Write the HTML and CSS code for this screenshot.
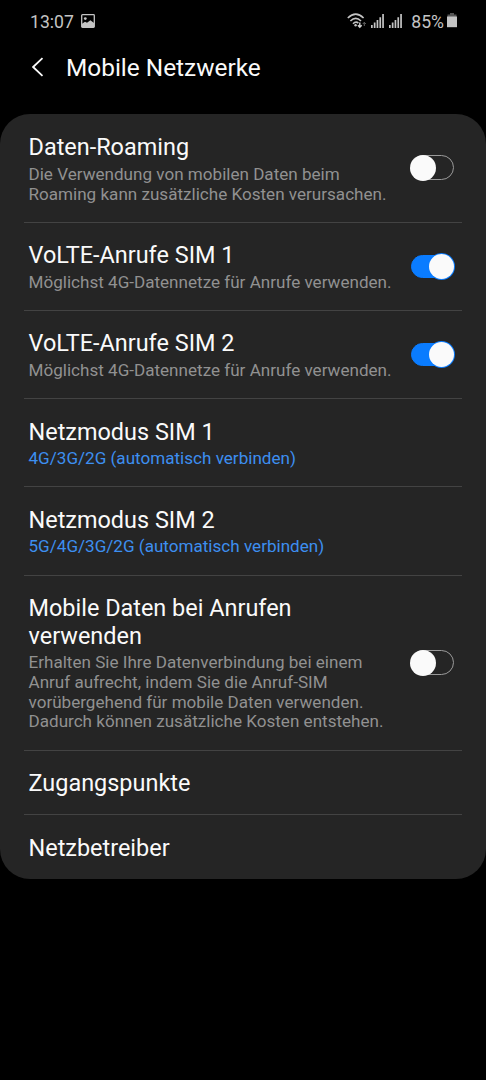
FILE: index.html
```html
<!DOCTYPE html>
<html lang="de">
<head>
<meta charset="utf-8">
<title>Mobile Netzwerke</title>
<link rel="stylesheet" href="styles.css">
</head>
<body>
<div class="status">
  <span class="clock">13:07</span>
  <svg class="picture" width="14" height="14" viewBox="0 0 14 14"><rect x=".7" y=".7" width="12.6" height="12.6" rx=".8" fill="none" stroke="#c4c4c4" stroke-width="1.3"/><circle cx="4.3" cy="4.6" r="1.4" fill="#c4c4c4"/><path d="M1 9.8l3-2 2 1 3.4-2.6L13 9V13H1z" fill="#c4c4c4"/></svg>
  <svg class="wifi" width="20" height="16" viewBox="0 0 20 16"><g fill="none" stroke="#c4c4c4" stroke-width="1.6"><path d="M.8 5Q8.7 -2.6 16.6 5"/><path d="M3.4 8Q8.7 2.9 14 8"/><path d="M6 10.7Q8.7 8 11.4 10"/></g><circle cx="8.6" cy="12.2" r="1.2" fill="#c4c4c4"/><path d="M12.8 9.5v4.7M10.9 12.2l1.9 2 1.9-2" fill="none" stroke="#d2d2d2" stroke-width="1.4"/><path d="M17.3 13V9.5M15.8 11l1.5-1.7 1.5 1.7" fill="none" stroke="#666" stroke-width="1"/></svg>
  <svg class="signal" width="13" height="14" viewBox="0 0 13 14"><path d="M0 11h1.7v3H0zM2.8 8.5h1.7V14H2.8zM5.6 6h1.7v8H5.6zM8.4 3.2h1.7V14H8.4zM11.2 0h1.7v14h-1.7z" fill="#c4c4c4"/></svg>
  <svg class="signal second" width="13" height="14" viewBox="0 0 13 14"><path d="M0 11h1.7v3H0zM2.8 8.5h1.7V14H2.8zM5.6 6h1.7v8H5.6zM8.4 3.2h1.7V14H8.4zM11.2 0h1.7v14h-1.7z" fill="#c4c4c4"/></svg>
  <span class="percent">85%</span>
  <svg class="battery" width="10" height="15" viewBox="0 0 10 15"><path d="M3 0h4v1.5h2.5V4H.5V1.5H3z" fill="#555"/><path d="M0 3.5h10v10.7H0z" fill="#c4c4c4"/></svg>
</div>
<header class="header">
  <svg class="back" width="12" height="20" viewBox="0 0 12 20"><path d="M10.5 1.2L1.1 10l9.4 8.8" fill="none" stroke="#fafafa" stroke-width="1.8"/></svg>
  <h1 class="heading">Mobile Netzwerke</h1>
</header>
<main class="card">
  <section class="row roaming">
    <div class="text"><h2 class="title">Daten-Roaming</h2><p class="note">Die Verwendung von mobilen Daten beim<br>Roaming kann zusätzliche Kosten verursachen.</p></div>
    <div class="switch"><span class="knob"></span></div>
  </section>
  <section class="row">
    <div class="text"><h2 class="title">VoLTE-Anrufe SIM 1</h2><p class="note">Möglichst 4G-Datennetze für Anrufe verwenden.</p></div>
    <div class="switch on"><span class="knob"></span></div>
  </section>
  <section class="row">
    <div class="text"><h2 class="title">VoLTE-Anrufe SIM 2</h2><p class="note">Möglichst 4G-Datennetze für Anrufe verwenden.</p></div>
    <div class="switch on"><span class="knob"></span></div>
  </section>
  <section class="row">
    <div class="text"><h2 class="title">Netzmodus SIM 1</h2><p class="note value">4G/3G/2G (automatisch verbinden)</p></div>
  </section>
  <section class="row">
    <div class="text"><h2 class="title">Netzmodus SIM 2</h2><p class="note value">5G/4G/3G/2G (automatisch verbinden)</p></div>
  </section>
  <section class="row calls">
    <div class="text"><h2 class="title">Mobile Daten bei Anrufen<br>verwenden</h2><p class="note">Erhalten Sie Ihre Datenverbindung bei einem<br>Anruf aufrecht, indem Sie die Anruf-SIM<br>vorübergehend für mobile Daten verwenden.<br>Dadurch können zusätzliche Kosten entstehen.</p></div>
    <div class="switch"><span class="knob"></span></div>
  </section>
  <section class="row single"><h2 class="title">Zugangspunkte</h2></section>
  <section class="row single last"><h2 class="title">Netzbetreiber</h2></section>
</main>
</body>
</html>
```
FILE: styles.css
```css
* { box-sizing: border-box; }
body {
  margin: 0;
  min-height: 1080px;
  background: #000;
  color: #fafafa;
  font-family: Roboto, sans-serif;
}
h1, h2, p { margin: 0; font-weight: 400; white-space: nowrap; }
.status {
  display: flex;
  align-items: center;
  height: 42px;
  padding: 0 29px 0 30px;
  color: #c4c4c4;
  font-size: 17.6px;
}
.clock, .percent { padding-top: 1px; }
.picture { margin-left: 7px; margin-top: -1px; }
.wifi { margin-left: auto; }
.signal { margin-left: 4px; }
.second { margin-left: 5px; }
.percent { margin-left: 9px; }
.battery { margin-left: 3px; margin-top: -1px; }
.header {
  display: flex;
  align-items: center;
  height: 50px;
  padding-left: 32px;
}
.heading { margin-left: 22px; padding-top: 1px; font-size: 24.4px; line-height: 30px; }
.card {
  margin-top: 22px;
  height: 765px;
  padding: 0 24px;
  border-radius: 30px;
  background: #252525;
}
.row {
  display: flex;
  align-items: center;
  justify-content: space-between;
  height: 88.2px;
  padding: 0 8px 0 4.5px;
  border-bottom: 1px solid #434343;
}
.roaming { height: 108.8px; }
.calls { height: 175.2px; }
.single { height: 64.6px; padding-top: 2px; }
.last { border-bottom: 0; }
.text { padding-top: 2px; }
.roaming .text { padding-top: 3px; }
.title { font-size: 23.45px; line-height: 27.5px; }
.note { margin-top: 3px; color: #919191; font-size: 17.08px; line-height: 19.8px; }
.value { color: #3d8ff0; }
.switch {
  display: flex;
  align-items: center;
  flex: none;
  width: 43px;
  height: 25px;
  border: 1px solid #9a9a9a;
  border-radius: 13px;
}
.knob {
  flex: none;
  width: 26px;
  height: 26px;
  margin: 0 -2px;
  border-radius: 50%;
  background: #fafafa;
}
.on {
  justify-content: flex-end;
  height: 23px;
  border-color: #0a7cff;
  background: #0a7cff;
}
.on .knob { width: 25px; height: 25px; margin-right: -1px; box-shadow: 0 0 0 1px #0a7cff; }
```
